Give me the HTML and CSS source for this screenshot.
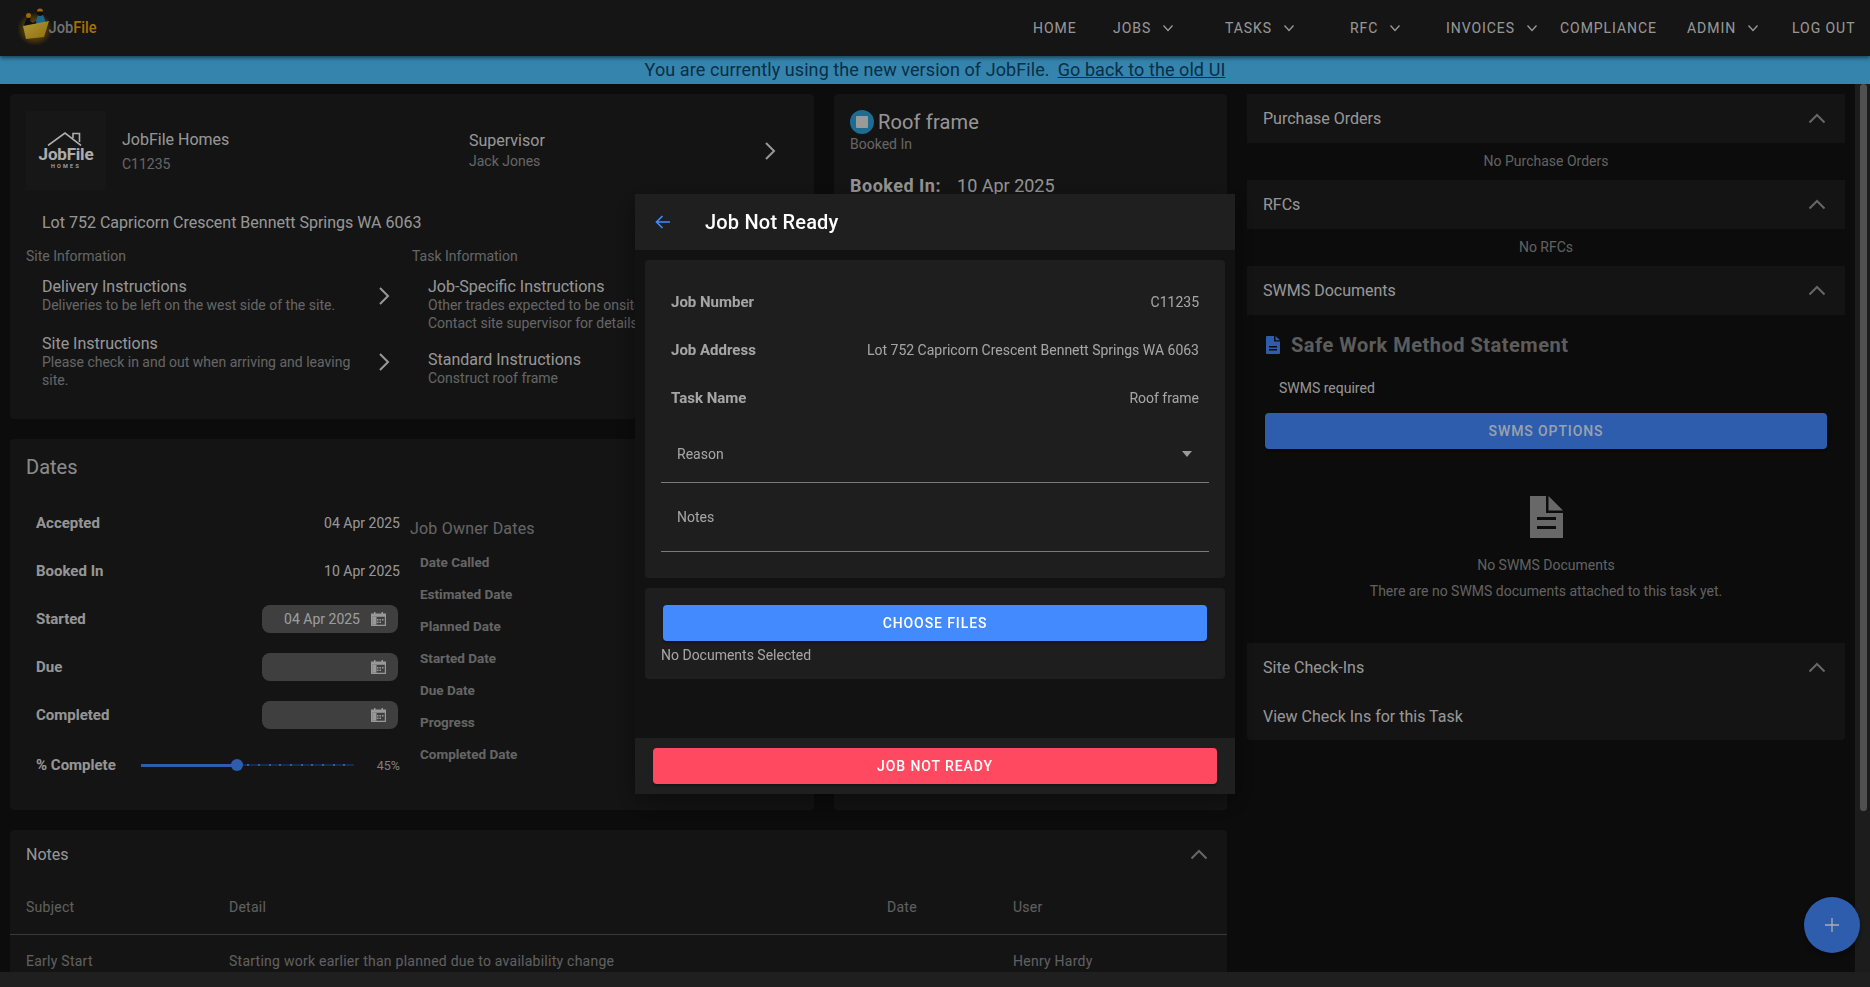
FILE: index.html
```html
<!DOCTYPE html>
<html lang="en">
<head>
<meta charset="utf-8">
<title>JobFile</title>
<link rel="stylesheet" href="styles.css">
</head>
<body>
<div class="app">
  <header class="nav">
    <svg class="brand" viewBox="18 8 84 40" width="84" height="40" aria-label="JobFile">
      <defs>
        <radialGradient id="glow"><stop offset="0" stop-color="#d79a10" stop-opacity=".9"/><stop offset=".65" stop-color="#b07a08" stop-opacity=".5"/><stop offset="1" stop-color="#b07a08" stop-opacity="0"/></radialGradient>
        <linearGradient id="fold" x1="0" y1="0" x2="1" y2="1"><stop offset="0" stop-color="#ffe45a"/><stop offset="1" stop-color="#d9a10e"/></linearGradient>
      </defs>
      <ellipse cx="35" cy="29" rx="18" ry="17" fill="url(#glow)"/>
      <path d="M28 16c3 0 3 4 2 5l3 2 3-2 1 2-4 3-3-1-1 6-5 1 0-7 2-5c1-1 1-3 2-4Z" fill="#161616"/>
      <circle cx="28.500" cy="15.500" r="2.500" fill="#e59a10"/>
      <path d="M38 15h5l2 5 0 5-8 2-1-6Z" fill="#2a9ad0"/>
      <circle cx="40" cy="13" r="3" fill="#161616"/>
      <path d="M37 11.500a3 3 0 0 1 6 0Z" fill="#e59a10"/>
      <path d="M23 26 49 21 44 37 26 39Z" fill="url(#fold)"/>
      <text x="48.500" y="33" class="brand-text" textLength="48" lengthAdjust="spacingAndGlyphs"><tspan class="brand-job">Job</tspan><tspan class="brand-file">File</tspan></text>
    </svg>
    <nav class="nav-links">
      <span class="nav-item">HOME</span>
      <span class="nav-item">JOBS<svg class="nav-chev" viewBox="0 0 12 8"><path d="M1.500 1.500 6 6.500l4.500-5"/></svg></span>
      <span class="nav-item">TASKS<svg class="nav-chev" viewBox="0 0 12 8"><path d="M1.500 1.500 6 6.500l4.500-5"/></svg></span>
      <span class="nav-item">RFC<svg class="nav-chev" viewBox="0 0 12 8"><path d="M1.500 1.500 6 6.500l4.500-5"/></svg></span>
      <span class="nav-item">INVOICES<svg class="nav-chev" viewBox="0 0 12 8"><path d="M1.500 1.500 6 6.500l4.500-5"/></svg></span>
      <span class="nav-item">COMPLIANCE</span>
      <span class="nav-item">ADMIN<svg class="nav-chev" viewBox="0 0 12 8"><path d="M1.500 1.500 6 6.500l4.500-5"/></svg></span>
      <span class="nav-item">LOG OUT</span>
    </nav>
  </header>
  <div class="banner">You are currently using the new version of JobFile.<a class="banner-link">Go back to the old UI</a></div>
  <div class="work">
    <main class="content">
      <div class="left-col">
        <div class="top-grid">
          <div class="left-stack">
            <section class="card job-card">
              <div class="job-head">
                <div class="homes-logo">
                  <svg class="homes-roof" viewBox="0 0 38 14" width="38" height="14"><path d="M1 13.500 18 1l16 12.500M26 6V1.500h6.500V10" /></svg>
                  <span class="homes-name">JobFile</span>
                  <span class="homes-sub">HOMES</span>
                </div>
                <div class="head-col">
                  <div class="head-title">JobFile Homes</div>
                  <div class="head-code">C11235</div>
                </div>
                <div class="head-col head-col-person">
                  <div class="head-title">Supervisor</div>
                  <div class="head-person">Jack Jones</div>
                </div>
                <svg class="chev-right head-chev" viewBox="0 0 12 20"><path d="M2 2l8 8-8 8"/></svg>
              </div>
              <div class="address">Lot 752 Capricorn Crescent Bennett Springs WA 6063</div>
              <div class="info-grid">
                <div class="info-col-site">
                  <div class="info-heading">Site Information</div>
                  <div class="info-item">
                    <div class="info-text"><div class="info-title">Delivery Instructions</div><div class="info-sub">Deliveries to be left on the west side of the site.</div></div>
                    <svg class="chev-right" viewBox="0 0 12 20"><path d="M2 2l8 8-8 8"/></svg>
                  </div>
                  <div class="info-item">
                    <div class="info-text"><div class="info-title">Site Instructions</div><div class="info-sub">Please check in and out when arriving and leaving site.</div></div>
                    <svg class="chev-right" viewBox="0 0 12 20"><path d="M2 2l8 8-8 8"/></svg>
                  </div>
                </div>
                <div class="info-col-task">
                  <div class="info-heading">Task Information</div>
                  <div class="info-item">
                    <div class="info-text"><div class="info-title">Job-Specific Instructions</div><div class="info-sub">Other trades expected to be onsite.<br>Contact site supervisor for details.</div></div>
                  </div>
                  <div class="info-item">
                    <div class="info-text"><div class="info-title">Standard Instructions</div><div class="info-sub">Construct roof frame</div></div>
                  </div>
                </div>
              </div>
            </section>
            <section class="card dates-card">
              <h2 class="dates-title">Dates</h2>
              <div class="dates-grid">
                <div>
                  <div class="date-row"><span class="date-label">Accepted</span><span class="date-value">04 Apr 2025</span></div>
                  <div class="date-row"><span class="date-label">Booked In</span><span class="date-value">10 Apr 2025</span></div>
                  <div class="date-row"><span class="date-label">Started</span>
                    <span class="date-input"><span>04 Apr 2025</span><svg class="cal" viewBox="0 0 15 14"><path fill-rule="evenodd" d="M3 0h1.500v1.500h6V0H12v1.500h3V14H0V1.500h3ZM1.200 4.800V12.800h12.600V4.800ZM6 7h1.500v1.500H6Zm2.500 0H10v1.500H8.500Zm2.500 0h1.500v1.500H11ZM6 9.500h1.500V11H6Zm2.500 0H10V11H8.500Z"/><path d="M1.200 4.800h4.300v8H1.200Zm0 0"/></svg></span></div>
                  <div class="date-row"><span class="date-label">Due</span>
                    <span class="date-input"><span></span><svg class="cal" viewBox="0 0 15 14"><path fill-rule="evenodd" d="M3 0h1.500v1.500h6V0H12v1.500h3V14H0V1.500h3ZM1.200 4.800V12.800h12.600V4.800ZM6 7h1.500v1.500H6Zm2.500 0H10v1.500H8.500Zm2.500 0h1.500v1.500H11ZM6 9.500h1.500V11H6Zm2.500 0H10V11H8.500Z"/><path d="M1.200 4.800h4.300v8H1.200Zm0 0"/></svg></span></div>
                  <div class="date-row"><span class="date-label">Completed</span>
                    <span class="date-input"><span></span><svg class="cal" viewBox="0 0 15 14"><path fill-rule="evenodd" d="M3 0h1.500v1.500h6V0H12v1.500h3V14H0V1.500h3ZM1.200 4.800V12.800h12.600V4.800ZM6 7h1.500v1.500H6Zm2.500 0H10v1.500H8.500Zm2.500 0h1.500v1.500H11ZM6 9.500h1.500V11H6Zm2.500 0H10V11H8.500Z"/><path d="M1.200 4.800h4.300v8H1.200Zm0 0"/></svg></span></div>
                  <div class="date-row slider-row">
                    <span class="date-label slider-label">% Complete</span>
                    <span class="slider"><span class="slider-fill"></span><span class="slider-thumb"></span></span>
                    <span class="slider-val">45%</span>
                  </div>
                </div>
                <div class="owner-col">
                  <div class="owner-title">Job Owner Dates</div>
                  <div class="owner-row">Date Called</div>
                  <div class="owner-row">Estimated Date</div>
                  <div class="owner-row">Planned Date</div>
                  <div class="owner-row">Started Date</div>
                  <div class="owner-row">Due Date</div>
                  <div class="owner-row">Progress</div>
                  <div class="owner-row">Completed Date</div>
                </div>
              </div>
            </section>
          </div>
          <section class="card task-card">
            <div class="task-title"><span class="status-dot"><span class="status-square"></span></span>Roof frame</div>
            <div class="task-status">Booked In</div>
            <div class="task-booked"><b>Booked In:</b><span>10 Apr 2025</span></div>
          </section>
        </div>
        <section class="card notes-card">
          <div class="acc-head notes-head"><span>Notes</span><svg class="chev-up" viewBox="0 0 18 11"><path d="M1.500 9.500 9 2l7.500 7.500"/></svg></div>
          <div class="note-row note-header"><span>Subject</span><span>Detail</span><span>Date</span><span>User</span></div>
          <div class="note-row"><span>Early Start</span><span>Starting work earlier than planned due to availability change</span><span></span><span>Henry Hardy</span></div>
        </section>
      </div>
      <aside class="right-col">
        <div class="acc-head"><span>Purchase Orders</span><svg class="chev-up" viewBox="0 0 18 11"><path d="M1.500 9.500 9 2l7.500 7.500"/></svg></div>
        <div class="acc-empty">No Purchase Orders</div>
        <div class="acc-head"><span>RFCs</span><svg class="chev-up" viewBox="0 0 18 11"><path d="M1.500 9.500 9 2l7.500 7.500"/></svg></div>
        <div class="acc-empty">No RFCs</div>
        <div class="acc-head"><span>SWMS Documents</span><svg class="chev-up" viewBox="0 0 18 11"><path d="M1.500 9.500 9 2l7.500 7.500"/></svg></div>
        <div class="swms">
          <div class="swms-title"><svg class="swms-doc" viewBox="0 0 14 18"><path fill-rule="evenodd" d="M0 1a1 1 0 0 1 1-1h7v5.500h6V17a1 1 0 0 1-1 1H1a1 1 0 0 1-1-1ZM3 10h8v1.500H3Zm0 3h8v1.500H3Z"/><path d="M9.500 0 14 4.300H9.500Z"/></svg>Safe Work Method Statement</div>
          <div class="swms-req">SWMS required</div>
          <div class="btn swms-btn">SWMS OPTIONS</div>
          <svg class="swms-big" viewBox="0 0 33 42"><path fill-rule="evenodd" d="M0 0H16V17H33V42H0ZM7 21H26V24H7ZM7 30H26V33H7Z"/><path d="M18.500 0 33 14.500H18.500Z"/></svg>
          <div class="swms-none">No SWMS Documents</div>
          <div class="swms-hint">There are no SWMS documents attached to this task yet.</div>
        </div>
        <div class="checkins">
          <div class="acc-head"><span>Site Check-Ins</span><svg class="chev-up" viewBox="0 0 18 11"><path d="M1.500 9.500 9 2l7.500 7.500"/></svg></div>
          <div class="checkins-link">View Check Ins for this Task</div>
        </div>
      </aside>
    </main>
    <div class="vbar"><span class="vthumb"></span></div>
  </div>
  <div class="hbar"></div>
</div>

<div class="fab"><svg viewBox="0 0 14 14" width="14" height="14"><path d="M7 0v14M0 7h14"/></svg></div>

<div class="scrim">
  <div class="modal">
    <div class="modal-head">
      <svg class="back" viewBox="0 0 16 14"><path d="M15 7H1.500M7.500 1 1.500 7l6 6"/></svg>
      <span class="modal-title">Job Not Ready</span>
    </div>
    <div class="modal-body">
      <div class="panel form-panel">
        <div class="kv"><span class="kv-k">Job Number</span><span class="kv-v">C11235</span></div>
        <div class="kv"><span class="kv-k">Job Address</span><span class="kv-v">Lot 752 Capricorn Crescent Bennett Springs WA 6063</span></div>
        <div class="kv"><span class="kv-k">Task Name</span><span class="kv-v">Roof frame</span></div>
        <div class="field select-field"><span>Reason</span><span class="caret"></span></div>
        <div class="field notes-field"><span>Notes</span></div>
      </div>
      <div class="panel files-panel">
        <div class="btn choose-btn">CHOOSE FILES</div>
        <div class="files-none">No Documents Selected</div>
      </div>
    </div>
    <div class="modal-foot"><div class="btn danger-btn">JOB NOT READY</div></div>
  </div>
</div>
</body>
</html>
```

FILE: styles.css
```css
* { box-sizing: border-box; }
html, body { margin: 0; height: 100%; overflow: hidden; }
body { font-family: Roboto, "Liberation Sans", sans-serif; background: #121212; color: rgba(255,255,255,.87); font-size: 14px; }
.app { height: 100vh; display: flex; flex-direction: column; overflow: hidden; }

/* top bar */
.nav { height: 56px; flex: none; background: #1f1f1f; display: flex; align-items: center; justify-content: space-between; padding: 0 15px 0 18px; box-shadow: 0 2px 4px rgba(0,0,0,.5); position: relative; z-index: 2; }
.brand-text { font: 500 16px Roboto, sans-serif; }
.brand-job { fill: #a8a8a8; }
.brand-file { fill: #f0a800; }
.nav-links { display: grid; grid-template-columns: 80px 112px 125px 96px 114px 127px 105px 63px; font-size: 14px; font-weight: 400; letter-spacing: .95px; color: rgba(255,255,255,.87); }
.nav-item { display: flex; align-items: center; white-space: nowrap; }
.nav-chev { width: 12px; height: 8px; margin-left: 11px; fill: none; stroke: currentColor; stroke-width: 1.3; }

.banner { height: 28px; flex: none; background: #4ec3ff; color: #0f4566; font-size: 18px; letter-spacing: .08px; line-height: 28px; text-align: center; }
.banner-link { margin-left: 8px; text-decoration: underline; }

.work { flex: 1; min-height: 0; display: flex; }
.content { flex: 1; min-width: 0; overflow: hidden; display: flex; gap: 20px; padding: 10px 10px 0; }
.vbar { width: 15px; flex: none; background: #2a2a2a; padding: 0 3px 0 5px; }
.vthumb { display: block; width: 7px; height: 727px; background: #777; border-radius: 4px; }
.hbar { height: 15px; flex: none; background: #2e2e2e; }

/* cards */
.card { background: #1e1e1e; border-radius: 4px; }
.left-col { width: 1217px; flex: none; display: flex; flex-direction: column; gap: 20px; }
.top-grid { display: grid; grid-template-columns: 804px 393px; gap: 20px; }
.left-stack { display: flex; flex-direction: column; gap: 20px; }

.job-card { height: 325px; padding: 17px 16px; }
.job-head { display: grid; grid-template-columns: 96px 347px 1fr 22px; align-items: center; height: 79px; padding-right: 12px; }
.homes-logo { width: 80px; height: 79px; background: #222; display: flex; flex-direction: column; align-items: center; padding-top: 21px; color: #fff; }
.homes-roof { flex: none; fill: none; stroke: currentColor; stroke-width: 1.6; }
.homes-name { font-size: 17px; font-weight: 700; line-height: 14px; margin-top: 1px; letter-spacing: -.2px; }
.homes-sub { font-size: 5.500px; letter-spacing: 2.200px; line-height: 8px; margin-top: 1px; font-weight: 500; }
.head-col { align-self: center; }
.head-col-person { padding-bottom: 4px; }
.head-title { font-size: 16px; line-height: 24px; }
.head-code { font-size: 14px; line-height: 18px; color: rgba(255,255,255,.54); margin-top: 3px; }
.head-person { font-size: 14px; line-height: 16px; color: rgba(255,255,255,.54); }
.chev-right { width: 12px; height: 20px; fill: none; stroke: rgba(255,255,255,.87); stroke-width: 2; flex: none; }
.head-chev { justify-self: start; }
.address { font-size: 16px; line-height: 24px; padding-left: 16px; margin-top: 21px; }
.info-grid { display: grid; grid-template-columns: 386px 1fr; margin-top: 11px; }
.info-heading { font-size: 14px; line-height: 20px; color: rgba(255,255,255,.54); margin-bottom: 12px; }
.info-item { display: flex; align-items: center; gap: 20px; padding-left: 16px; margin-bottom: 21px; width: 374px; }
.info-col-task .info-item { margin-bottom: 19px; }
.info-text { width: 316px; flex: none; }
.info-title { font-size: 16px; line-height: 18px; }
.info-sub { font-size: 14px; line-height: 18px; color: rgba(255,255,255,.54); }

.dates-card { height: 371px; padding: 16px 16px 0 16px; }
.dates-title { margin: 0 0 20px; font-size: 20px; font-weight: 400; line-height: 24px; color: rgba(255,255,255,.8); }
.dates-grid { display: grid; grid-template-columns: 364px 1fr; gap: 10px; padding-left: 10px; }
.date-row { display: flex; align-items: center; justify-content: space-between; height: 48px; }
.date-label { font-size: 15px; font-weight: 700; }
.date-value { font-size: 14px; color: rgba(255,255,255,.87); }
.date-input { width: 136px; height: 28px; margin-right: 2px; border-radius: 8px; background: #5e5e5e; display: flex; align-items: center; justify-content: flex-end; padding-right: 12px; gap: 11px; color: rgba(255,255,255,.87); font-size: 14px; }
.cal { width: 15px; height: 14px; fill: #e2e2e2; }
.slider-row { height: 52px; justify-content: flex-start; }
.slider-label { width: 105px; flex: none; }
.slider { position: relative; width: 213px; height: 2px; background: repeating-linear-gradient(90deg, #448aff 0 2px, #213e73 2px 10.65px); }
.slider-fill { position: absolute; left: 0; top: 0; height: 3px; width: 45%; background: #448aff; }
.slider-thumb { position: absolute; left: 90px; top: -5px; width: 12px; height: 12px; border-radius: 50%; background: #448aff; }
.slider-val { margin-left: auto; font-size: 12.500px; color: rgba(255,255,255,.7); }
.owner-col { padding-top: 18px; }
.owner-title { font-size: 16px; line-height: 24px; color: rgba(255,255,255,.54); margin-bottom: 5px; letter-spacing: .2px; }
.owner-row { height: 32px; line-height: 32px; margin-left: 10px; font-size: 13.500px; font-weight: 700; color: rgba(255,255,255,.54); }

.task-card { padding: 16px 16px 0 16px; }
.task-title { display: flex; align-items: center; gap: 4px; font-size: 20px; font-weight: 400; line-height: 24px; letter-spacing: .15px; }
.status-dot { width: 24px; height: 24px; border-radius: 50%; background: #2f9fd8; display: flex; align-items: center; justify-content: center; }
.status-square { width: 12px; height: 12px; background: #e4e4e4; border-radius: 1px; }
.task-status { font-size: 14px; line-height: 20px; color: rgba(255,255,255,.54); }
.task-booked { font-size: 18px; margin-top: 20px; display: flex; gap: 16px; line-height: 24px; }
.task-booked b { letter-spacing: .5px; }

.notes-card { flex: none; height: 200px; }
.acc-head { height: 49px; background: #1e1e1e; display: flex; align-items: center; justify-content: space-between; padding: 0 19px 0 16px; font-size: 16px; flex: none; }
.chev-up { width: 18px; height: 11px; fill: none; stroke: rgba(255,255,255,.54); stroke-width: 2; }
.notes-head { background: none; padding-right: 19px; }
.note-row { display: grid; grid-template-columns: 203px 658px 126px 1fr; align-items: center; padding-left: 16px; height: 52px; color: rgba(255,255,255,.5); font-size: 14px; letter-spacing: .25px; }
.note-header { height: 56px; border-bottom: 1px solid #555; }

/* right column */
.right-col { flex: 1; min-width: 0; display: flex; flex-direction: column; }
.acc-empty { height: 37px; line-height: 37px; text-align: center; color: rgba(255,255,255,.54); font-size: 14px; }
.swms { height: 328px; display: flex; flex-direction: column; align-items: center; padding: 0 18px; }
.swms-title { align-self: flex-start; display: flex; align-items: center; gap: 11px; margin-top: 18px; margin-left: 1px; height: 24px; font-size: 20px; font-weight: 700; color: rgba(255,255,255,.5); letter-spacing: .5px; }
.swms-doc { width: 14px; height: 18px; fill: #448aff; }
.swms-req { align-self: flex-start; margin-left: 14px; margin-top: 21px; line-height: 20px; font-size: 14px; }
.btn { border-radius: 4px; display: flex; align-items: center; justify-content: center; height: 36px; font-size: 14px; font-weight: 500; letter-spacing: .9px; color: #fff; box-shadow: 0 2px 2px rgba(0,0,0,.3); }
.swms-btn { align-self: stretch; background: #448aff; margin-top: 15px; color: rgba(255,255,255,.87); }
.swms-big { width: 33px; height: 42px; fill: #9a9a9a; margin-top: 47px; flex: none; }
.swms-none { margin-top: 17px; line-height: 20px; color: rgba(255,255,255,.54); font-size: 14px; }
.swms-hint { margin-top: 6px; line-height: 20px; color: rgba(255,255,255,.54); font-size: 14px; }
.checkins { background: #1e1e1e; border-radius: 0 0 4px 4px; height: 97px; }
.checkins-link { padding-left: 16px; margin-top: 13px; font-size: 16px; line-height: 24px; }

/* floating button */
.fab { position: fixed; left: 1804px; top: 897px; width: 56px; height: 56px; border-radius: 50%; background: #448aff; display: flex; align-items: center; justify-content: center; box-shadow: 0 3px 6px rgba(0,0,0,.4); }
.fab svg { fill: none; stroke: #fff; stroke-width: 1.3; }

/* modal */
.scrim { position: fixed; inset: 0; background: rgba(0,0,0,.32); display: flex; align-items: center; justify-content: center; z-index: 10; }
.modal { width: 600px; height: 600px; background: #121212; display: flex; flex-direction: column; box-shadow: 0 8px 24px rgba(0,0,0,.4); }
.modal-head { height: 56px; flex: none; background: #1f1f1f; display: flex; align-items: center; padding-left: 20px; }
.back { width: 16px; height: 14px; fill: none; stroke: #448aff; stroke-width: 1.6; }
.modal-title { margin-left: 34px; font-size: 20px; font-weight: 500; letter-spacing: .2px; color: #fff; }
.modal-body { flex: 1; padding: 10px; display: flex; flex-direction: column; gap: 10px; }
.panel { background: #1e1e1e; border-radius: 4px; }
.form-panel { height: 318px; padding: 18px 16px 0; }
.kv { height: 48px; display: flex; align-items: center; justify-content: space-between; padding: 0 10px; font-size: 14px; color: rgba(255,255,255,.6); }
.kv-k { font-size: 15px; font-weight: 700; }
.field { display: flex; justify-content: space-between; padding: 0 16px; border-bottom: 1px solid #7a7a7a; color: rgba(255,255,255,.6); font-size: 14px; }
.select-field { height: 61px; padding-top: 22px; line-height: 20px; }
.notes-field { height: 69px; padding-top: 24px; line-height: 20px; }
.caret { width: 0; height: 0; margin: 7px 1px 0 0; border: 5px solid transparent; border-top: 6px solid #9a9a9a; border-bottom: 0; }
.files-panel { height: 91px; padding: 17px 16px 0; }
.choose-btn { margin: 0 2px; background: #448aff; }
.files-none { margin-top: 4px; line-height: 20px; color: rgba(255,255,255,.6); font-size: 14px; }
.modal-foot { height: 56px; flex: none; background: #1f1f1f; padding: 10px 18px; }
.danger-btn { background: #ff4961; }
```
